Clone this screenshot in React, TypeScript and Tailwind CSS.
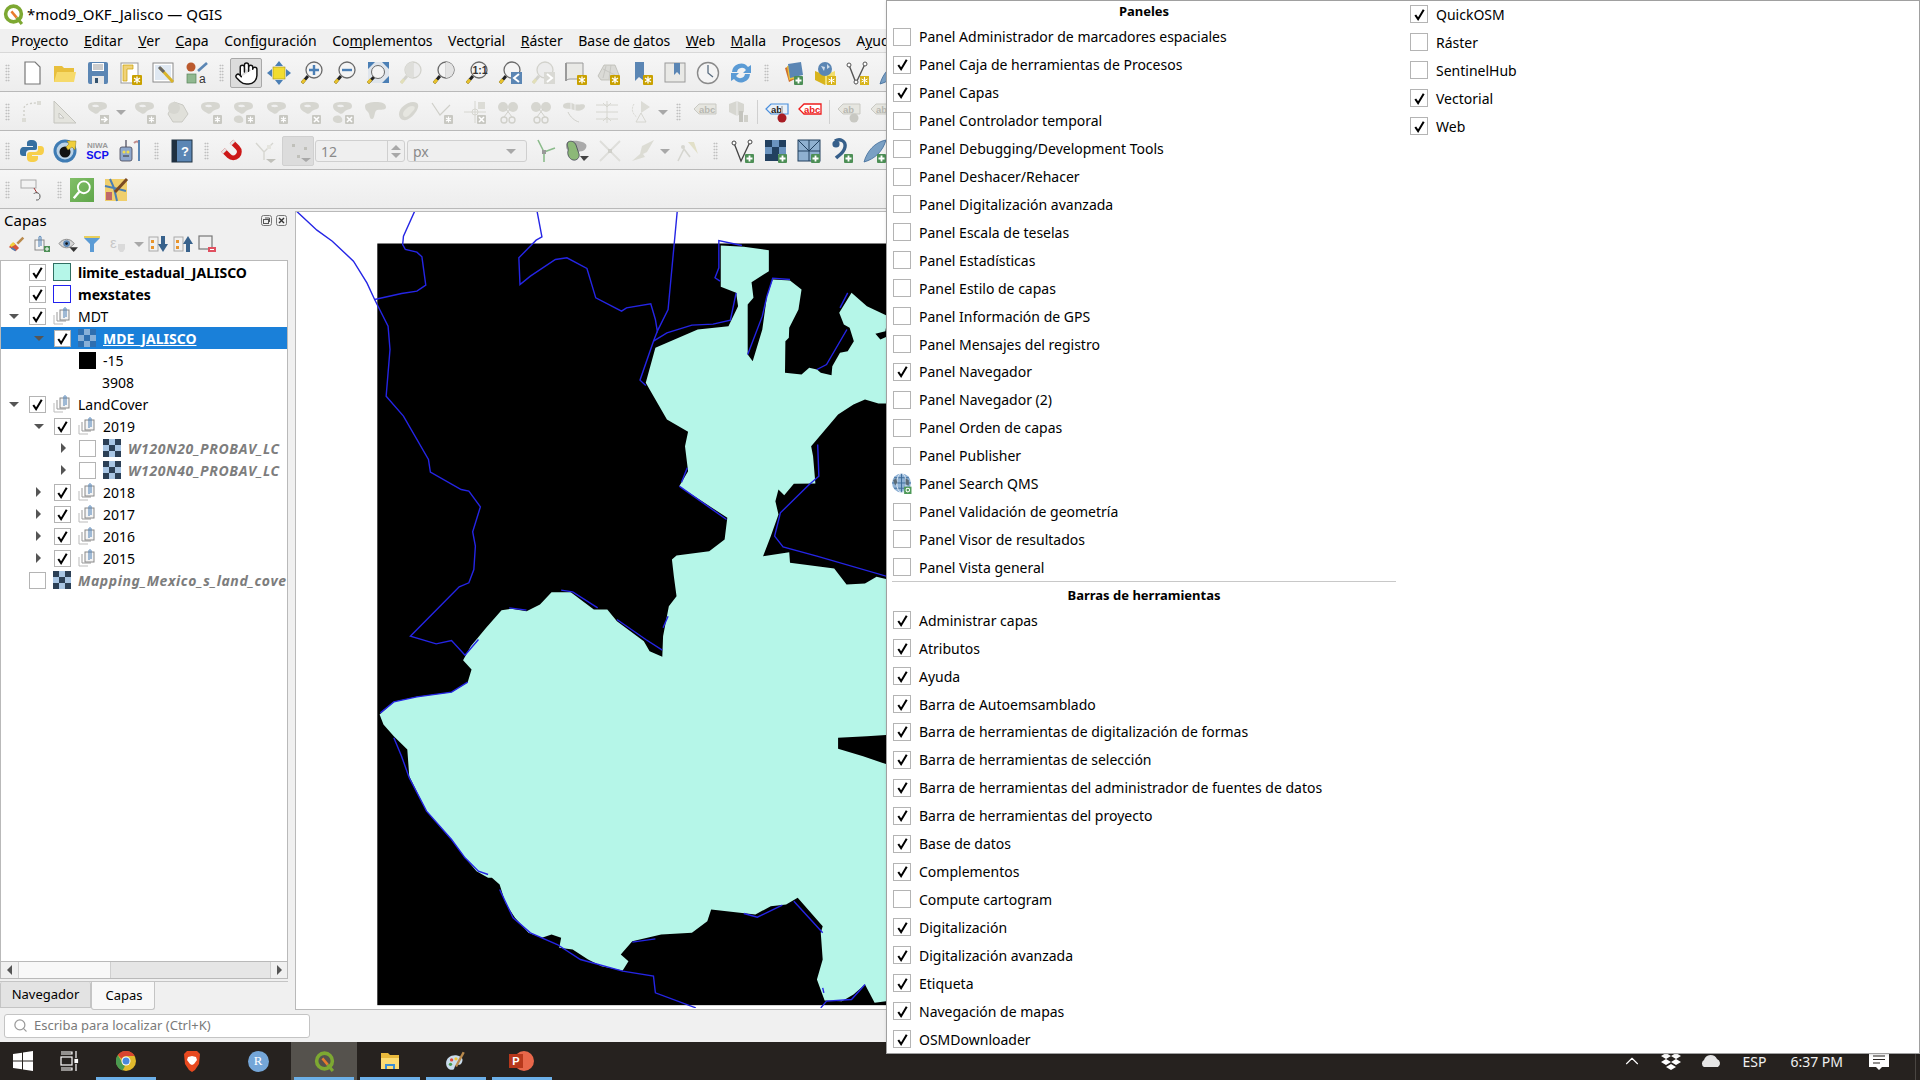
import { Hand, Search, ChevronUp } from 'lucide-react';
import type { ReactNode } from 'react';

const FONT = { fontFamily: '"Noto Sans", sans-serif' };

const PANELS: [string, boolean][] = [
  ['Panel Administrador de marcadores espaciales', false],
  ['Panel Caja de herramientas de Procesos', true],
  ['Panel Capas', true],
  ['Panel Controlador temporal', false],
  ['Panel Debugging/Development Tools', false],
  ['Panel Deshacer/Rehacer', false],
  ['Panel Digitalización avanzada', false],
  ['Panel Escala de teselas', false],
  ['Panel Estadísticas', false],
  ['Panel Estilo de capas', false],
  ['Panel Información de GPS', false],
  ['Panel Mensajes del registro', false],
  ['Panel Navegador', true],
  ['Panel Navegador (2)', false],
  ['Panel Orden de capas', false],
  ['Panel Publisher', false],
  ['Panel Search QMS', false],
  ['Panel Validación de geometría', false],
  ['Panel Visor de resultados', false],
  ['Panel Vista general', false],
];

const TOOLBARS: [string, boolean][] = [
  ['Administrar capas', true],
  ['Atributos', true],
  ['Ayuda', true],
  ['Barra de Autoemsamblado', true],
  ['Barra de herramientas de digitalización de formas', true],
  ['Barra de herramientas de selección', true],
  ['Barra de herramientas del administrador de fuentes de datos', true],
  ['Barra de herramientas del proyecto', true],
  ['Base de datos', true],
  ['Complementos', true],
  ['Compute cartogram', false],
  ['Digitalización', true],
  ['Digitalización avanzada', true],
  ['Etiqueta', true],
  ['Navegación de mapas', true],
  ['OSMDownloader', true],
];

const MORE: [string, boolean][] = [
  ['QuickOSM', true],
  ['Ráster', false],
  ['SentinelHub', false],
  ['Vectorial', true],
  ['Web', true],
];

const MENUS: [string, string, string][] = [
  ['Pro', 'y', 'ecto'],
  ['', 'E', 'ditar'],
  ['', 'V', 'er'],
  ['', 'C', 'apa'],
  ['Con', 'f', 'iguración'],
  ['Co', 'm', 'plementos'],
  ['Vect', 'o', 'rial'],
  ['', 'R', 'áster'],
  ['Base de ', 'd', 'atos'],
  ['', 'W', 'eb'],
  ['', 'M', 'alla'],
  ['Pro', 'c', 'esos'],
  ['A', 'y', 'uda'],
];

function Check({ on, className }: { on: boolean; className: string }) {
  return (
    <span className={`flex shrink-0 items-center justify-center border border-[#b4b4b4] bg-white ${className}`}>
      {on && (
        <svg viewBox="0 0 16 16" className="h-[15px] w-[15px]">
          <path d="M3.5 8.5 L6.5 13 L12.5 3" fill="none" stroke="#000" strokeWidth="2.2" />
        </svg>
      )}
    </span>
  );
}

function QmsGlobe() {
  return (
    <svg viewBox="0 0 20 20" className="h-[21px] w-[21px] -ml-[2px] mr-[-1px] shrink-0">
      <circle cx="10" cy="9.5" r="9" fill="#8fb2d6" />
      <path d="M10 .5v18M1 9.5h18M3 4.5h14M3 14.5h14" stroke="#3d6a98" strokeWidth=".9" />
      <ellipse cx="10" cy="9.5" rx="4.5" ry="9" fill="none" stroke="#e4edf5" strokeWidth=".9" />
      <path d="M2 7l3-2 1 4-2 3zM14 5l3 2v5l-3-1z" fill="#5a6b78" />
      <rect x="12.5" y="13" width="7" height="7" fill="#4f9a58" />
      <circle cx="16" cy="16.3" r="1.7" fill="none" stroke="#fff" />
    </svg>
  );
}

function MenuRow({ label, on }: { label: string; on: boolean }) {
  return (
    <div className="flex h-[28px] items-center gap-[8px] pl-[6px] text-[14px] whitespace-nowrap text-black">
      {label === 'Panel Search QMS' ? <QmsGlobe /> : <Check on={on} className="h-[18px] w-[18px]" />}
      <span>{label}</span>
    </div>
  );
}

function Dots({ className = 'w-[17px]' }: { className?: string }) {
  return (
    <div className={`flex h-full shrink-0 items-center justify-center ${className}`}>
      <div className="h-[18px] w-[5px] bg-[radial-gradient(#b4b4b4_0.7px,transparent_0.9px)] bg-[length:2.5px_3px]" />
    </div>
  );
}

function Tool({ children }: { children: ReactNode }) {
  return <div className="flex h-[24px] w-[33px] shrink-0 items-center justify-center">{children}</div>;
}

function Icon({ children }: { children: ReactNode }) {
  return (
    <svg viewBox="0 0 24 24" className="h-[24px] w-[24px] overflow-visible">
      {children}
    </svg>
  );
}

function Arrow({ className = 'w-[14px]' }: { className?: string }) {
  return (
    <div className={`flex shrink-0 justify-center ${className}`}>
      <div className="h-0 w-0 border-x-[5px] border-t-[5px] border-x-transparent border-t-[#a8a8a8]" />
    </div>
  );
}

function GearBadge() {
  return (
    <g>
      <rect x="13" y="14" width="10" height="10" rx="1" fill="#c9a100" />
      <path d="M18 15.5v7M15 17l6 4M21 17l-6 4" stroke="#fff" strokeWidth="1.3" />
    </g>
  );
}

function PlusBadge() {
  return (
    <g>
      <rect x="14" y="15" width="9" height="9" rx="1" fill="#4d8f56" />
      <path d="M18.5 16.5v6M15.5 19.5h6" stroke="#fff" strokeWidth="1.8" />
    </g>
  );
}

function GrayBadge({ x = false }: { x?: boolean }) {
  return (
    <g>
      <rect x="14" y="15" width="9" height="9" rx="1" fill="#c8c8c2" />
      {x ? (
        <path d="M16 17l5 5M21 17l-5 5" stroke="#fff" strokeWidth="1.6" />
      ) : (
        <path d="M18.5 16.5v6M16 18l5 3M21 18l-5 3" stroke="#fff" strokeWidth="1.2" />
      )}
    </g>
  );
}

function Mag({ off = false, children }: { off?: boolean; children?: ReactNode }) {
  return (
    <Icon>
      <path d="M8 15L2 22" stroke={off ? '#d2d2cc' : '#222'} strokeWidth="3" />
      <path d="M5 18.5L2 22" stroke={off ? '#e2dfb8' : '#e8c22c'} strokeWidth="3" />
      <circle cx="14" cy="9" r="8" fill={off ? '#ececec' : '#f4f4f4'} stroke={off ? '#d2d2cc' : '#6a6a6a'} strokeWidth="1.3" />
      {children}
    </Icon>
  );
}

function GrayBlob({ children }: { children?: ReactNode }) {
  return (
    <Icon>
      <path d="M2 6c0-4 6-4 10-4s9 0 9 4-5 3-7 5-3 4-6 2-6-3-6-7z" fill="#d6d6d0" />
      <path d="M6 6c2-2 6-1 7 0s-5 2-7 0z" fill="#f0f0f0" />
      {children}
    </Icon>
  );
}

function Row({ children }: { children: ReactNode }) {
  return (
    <div className="flex h-[39px] shrink-0 items-center overflow-hidden border-b border-[#b9b9b9] bg-gradient-to-b from-[#f6f6f6] to-[#ededed] pt-[2px]">
      {children}
    </div>
  );
}

function ToolbarOne() {
  return (
    <Row>
      <Dots className="w-[15px]" />
      <Tool><Icon><path d="M5 1h10l5 5v17H5z" fill="#fff" stroke="#777" strokeWidth="1.2" /></Icon></Tool>
      <Tool><Icon><path d="M1 21V5h8l2 2h10v14z" fill="#e8bf3c" /><path d="M1 21l3-10h19l-2 10z" fill="#f6da6b" /></Icon></Tool>
      <Tool><Icon><rect x="2" y="1" width="20" height="22" rx="2" fill="#5b86b4" /><rect x="6" y="2" width="12" height="8" fill="#fff" /><path d="M7 4h10M7 6h10M7 8h10" stroke="#9a9a9a" /><rect x="6" y="15" width="12" height="8" fill="#e8e8e8" /><rect x="9" y="17" width="3" height="5" fill="#34536f" /></Icon></Tool>
      <Tool><Icon><rect x="2" y="2" width="17" height="20" fill="#fff" stroke="#999" /><path d="M4 4h10v4H8v12H4z" fill="#f0d27a" stroke="#c9a100" strokeWidth=".7" /><GearBadge /></Icon></Tool>
      <Tool><Icon><rect x="1" y="2" width="20" height="19" fill="#fff" stroke="#8a8a8a" /><rect x="3" y="4" width="16" height="15" fill="#dfe8f2" /><path d="M8 7l13 14" stroke="#d9b42a" strokeWidth="3" /><path d="M7 6l5 5" stroke="#666" strokeWidth="3" /></Icon></Tool>
      <Tool><Icon><circle cx="6" cy="6" r="4.5" fill="#bb5a2e" /><rect x="2" y="13" width="9" height="9" fill="#90b890" stroke="#5b855b" strokeWidth=".7" /><path d="M13 10L22 2" stroke="#5b86b4" strokeWidth="2.6" /><text x="14" y="22" fontSize="12" fill="#333" fontFamily="Liberation Sans">a</text></Icon></Tool>
      <Dots />
      <div className="flex h-[30px] w-[32px] shrink-0 items-center justify-center rounded-[2px] border border-[#a8a8a8] bg-[#dcdcdc]">
        <Hand size={25} fill="#fff" color="#111" strokeWidth={1.4} />
      </div>
      <Tool><Icon><rect x="6" y="6" width="12" height="12" fill="#f2dc30" stroke="#a08f1c" strokeWidth=".6" /><path d="M12 0l4 5H8zM12 24l4-5H8zM0 12l5-4v8zM24 12l-5-4v8z" fill="#4b7fb5" /></Icon></Tool>
      <Tool><Mag><path d="M9 9h10M14 4v10" stroke="#4b7fb5" strokeWidth="2.4" /></Mag></Tool>
      <Tool><Mag><path d="M9 9h10" stroke="#4b7fb5" strokeWidth="2.4" /></Mag></Tool>
      <Tool><Icon><rect x="2" y="1" width="21" height="21" fill="#dfe5ec" /><path d="M2 1h7L2 8zM23 1h-7l7 7zM23 22h-7l7-7zM2 22V15" fill="#4b7fb5" /><path d="M9 15L2 22" stroke="#222" strokeWidth="3" /><path d="M5 18.5L2 22" stroke="#e8c22c" strokeWidth="3" /><circle cx="12" cy="11" r="6.5" fill="#f4f4f4" stroke="#6a6a6a" /></Icon></Tool>
      <Tool><Mag off><path d="M14 1v16" stroke="#d2d2cc" /><path d="M14 1a8 8 0 0 0 0 16z" fill="#dededa" /></Mag></Tool>
      <Tool><Mag><path d="M14 1v16" stroke="#bbb" /><path d="M14 1a8 8 0 0 1 0 16z" fill="#e3e3e3" /></Mag></Tool>
      <Tool><Mag><text x="7.5" y="13" fontSize="10.5" fontWeight="700" fill="#333" fontFamily="Liberation Sans">1:1</text></Mag></Tool>
      <Tool><Mag><rect x="13" y="11" width="11" height="12" fill="#5b86b4" /><path d="M21 13l-5 4 5 4" fill="none" stroke="#fff" strokeWidth="2" /></Mag></Tool>
      <Tool><Mag off><rect x="13" y="11" width="11" height="12" fill="#d9d9d4" /><path d="M16 13l5 4-5 4" fill="none" stroke="#fff" strokeWidth="2" /></Mag></Tool>
      <Tool><Icon><path d="M2 2h17v16H6c-3 0-4 2-4 2z" fill="#e9e9e6" stroke="#9a9a9a" /><path d="M2 2v18" stroke="#9a9a9a" strokeWidth="2" /><GearBadge /></Icon></Tool>
      <Tool><Icon><path d="M1 15l6-11h11l4 10-6 5H4z" fill="#dadad6" stroke="#b4b4ae" strokeWidth=".7" /><path d="M6 8l12 6M9 5l-3 12M14 4l-2 14" stroke="#bfbfba" strokeWidth=".7" /><GearBadge /></Icon></Tool>
      <Tool><Icon><path d="M5 1h9v19l-5-4-4 4z" fill="#5b86b4" /><GearBadge /></Icon></Tool>
      <Tool><Icon><rect x="2" y="2" width="20" height="19" fill="#e9e9e6" stroke="#9a9a9a" /><path d="M11 2h6v12l-3-3-3 3z" fill="#5b86b4" /></Icon></Tool>
      <Tool><Icon><circle cx="12" cy="12" r="10.5" fill="#f4f4f4" stroke="#8a8a8a" strokeWidth="1.4" /><path d="M12 4v8l5 4" fill="none" stroke="#5a6d80" strokeWidth="1.3" /></Icon></Tool>
      <Tool><Icon><path d="M3 11a9 9 0 0 1 16-5l3-2v8h-8l3-3a5 5 0 0 0-9 2z" fill="#5b9bd5" /><path d="M21 13a9 9 0 0 1-16 5l-3 2v-8h8l-3 3a5 5 0 0 0 9-2z" fill="#5b9bd5" /></Icon></Tool>
      <Dots className="w-[18px]" />
      <Tool><Icon><path d="M5 7l7-3 3 14-6 3z" fill="#d0702c" /><path d="M7 5l8-2 2 14-8 2z" fill="#eac23c" /><path d="M8 3l13-2 2 13-13 3z" fill="#5b86b4" /><PlusBadge /></Icon></Tool>
      <Tool><Icon><path d="M2 10l10 4v10L2 19z" fill="#d8b41c" /><path d="M22 10l-10 4v10l10-5z" fill="#f2de6c" /><circle cx="12" cy="8" r="7" fill="#5b86b4" /><path d="M8 5l4 1-1 4zM14 3l3 3-3 2z" fill="#cfdcea" /><rect x="14" y="15" width="9" height="9" fill="#d8b41c" /><path d="M18.5 16v7M15.5 18l6 3M21.5 18l-6 3" stroke="#fff" /></Icon></Tool>
      <Tool><Icon><path d="M3 4l7 18 9-19" fill="none" stroke="#555" strokeWidth="1.4" /><circle cx="3" cy="4" r="2" fill="#fff" stroke="#555" /><circle cx="19" cy="3" r="2" fill="#fff" stroke="#555" /><circle cx="10" cy="21" r="2" fill="#fff" stroke="#555" /><rect x="14" y="15" width="9" height="9" fill="#d8b41c" /><path d="M18.5 16v7M15.5 18l6 3M21.5 18l-6 3" stroke="#fff" /></Icon></Tool>
      <Tool><Icon><path d="M1 23C4 12 12 3 23 1 20 12 12 20 1 23z" fill="#7aa0c4" stroke="#3d6a98" strokeWidth=".8" /></Icon></Tool>
    </Row>
  );
}

function ToolbarTwo() {
  return (
    <Row>
      <Dots className="w-[15px]" />
      <Tool><Icon><path d="M4 20V9c0-4 3-6 14-6" fill="none" stroke="#cfcfc9" strokeDasharray="2 2" strokeWidth="1.4" /><rect x="2" y="18" width="4" height="4" fill="#dcdcd6" /><rect x="17" y="1" width="4" height="4" fill="#dcdcd6" /></Icon></Tool>
      <Tool><Icon><path d="M1 1v22h22z" fill="#e4e4de" stroke="#c4c4be" /><path d="M6 13v5h5z" fill="#f0f0f0" stroke="#c4c4be" /></Icon></Tool>
      <Tool><GrayBlob><rect x="14" y="15" width="9" height="9" fill="#c8c8c2" /><path d="M15 19.5h5M18 17l3 2.5-3 2.5" fill="none" stroke="#fff" strokeWidth="1.4" /></GrayBlob></Tool>
      <Arrow />
      <Tool><GrayBlob><GrayBadge /></GrayBlob></Tool>
      <Tool><Icon><path d="M8 2l9 3 5 9-6 8H7L2 14z" fill="#e0e0da" stroke="#c9c9c3" /><circle cx="8" cy="8" r="6" fill="#d6d6d0" /></Icon></Tool>
      <Tool><GrayBlob><GrayBadge /></GrayBlob></Tool>
      <Tool><GrayBlob><path d="M2 18c2-3 6-3 8-1s2 6-2 6-7-2-6-5z" fill="#d6d6d0" /><GrayBadge /></GrayBlob></Tool>
      <Tool><GrayBlob><GrayBadge /></GrayBlob></Tool>
      <Tool><GrayBlob><GrayBadge x /></GrayBlob></Tool>
      <Tool><GrayBlob><path d="M2 18c2-3 6-3 8-1s2 6-2 6-7-2-6-5z" fill="#d6d6d0" /><GrayBadge x /></GrayBlob></Tool>
      <Tool><Icon><path d="M1 6c0-3 6-4 11-4s10 1 10 5-6 2-9 3-2 9-5 9-2-5-4-7-3-3-3-6z" fill="#d6d6d0" /></Icon></Tool>
      <Tool><Icon><path d="M2 14C2 8 10 2 16 2s6 4 4 8-7 9-11 10-7-2-7-6z" fill="#d6d6d0" /><path d="M6 14c0-3 5-8 9-8s3 3 1 5-5 6-7 6-3-1-3-3z" fill="#e6e6e0" /></Icon></Tool>
      <Tool><Icon><path d="M2 3l8 12 10-10" fill="none" stroke="#cfcfc9" strokeWidth="1.2" /><GrayBadge /></Icon></Tool>
      <Tool><Icon><path d="M12 1v22M1 12h22" stroke="#d6d6d0" /><circle cx="12" cy="12" r="3" fill="none" stroke="#d6d6d0" /><rect x="15" y="2" width="7" height="7" fill="#dcdcd6" /><GrayBadge x /></Icon></Tool>
      <Tool><Icon><circle cx="7" cy="7" r="5" fill="#d6d6d0" /><circle cx="17" cy="7" r="5" fill="#d6d6d0" /><circle cx="8" cy="20" r="3" fill="none" stroke="#d0d0ca" strokeWidth="1.4" /><circle cx="16" cy="20" r="3" fill="none" stroke="#d0d0ca" strokeWidth="1.4" /><path d="M8 17l6-8M16 17l-6-8" stroke="#d0d0ca" /></Icon></Tool>
      <Tool><Icon><circle cx="7" cy="7" r="5" fill="#d6d6d0" /><circle cx="17" cy="7" r="5" fill="#d6d6d0" /><circle cx="8" cy="20" r="3" fill="none" stroke="#d0d0ca" strokeWidth="1.4" /><circle cx="16" cy="20" r="3" fill="none" stroke="#d0d0ca" strokeWidth="1.4" /><path d="M8 17l6-8M16 17l-6-8" stroke="#d0d0ca" /></Icon></Tool>
      <Tool><Icon><path d="M1 6c0-4 8-4 11-2s11-2 11 2-7 6-11 4S1 10 1 6z" fill="#d6d6d0" /><path d="M9 2v9M13 2v9" stroke="#f0f0f0" /><path d="M6 12c2 5 7 9 11 10" fill="none" stroke="#d0d0ca" /></Icon></Tool>
      <Tool><Icon><path d="M1 5h22M1 12h22M1 19h22M12 1v22" stroke="#d6d6d0" /><path d="M8 3l4 4 4-4M8 21l4-4 4 4" fill="none" stroke="#d6d6d0" /></Icon></Tool>
      <Tool><Icon><path d="M13 1l9 6-9 6z" fill="#dcdcd6" /><path d="M6 4a9 9 0 0 0 3 13" fill="none" stroke="#d6d6d0" strokeDasharray="2 1" /><path d="M13 13l-5 9h10z" fill="none" stroke="#d6d6d0" /></Icon></Tool>
      <Arrow className="w-[13px]" />
      <Dots className="w-[19px]" />
      <Tool><Icon><path d="M1 9l5-5h17v10H6z" fill="#e6e6e0" stroke="#c9c9c3" /><text x="6" y="13" fontSize="9.5" fontWeight="700" fill="#b8b8b2" fontFamily="Liberation Sans">abc</text></Icon></Tool>
      <Tool><Icon><path d="M3 4l8-3 7 3v8l-7 4-8-4z" fill="#d6d6d0" /><path d="M11 1v15" stroke="#eee" /><rect x="13" y="11" width="4" height="11" fill="#c4c4be" /><rect x="18" y="15" width="4" height="7" fill="#d0d0ca" /></Icon></Tool>
      <div className="ml-[3px] mr-[2px] h-[24px] w-[1px] shrink-0 bg-[#d0d0d0]" />
      <Tool><Icon><path d="M1 9l5-5h17v10H6z" fill="#e8f0f8" stroke="#4b8fdc" strokeWidth="1.2" /><text x="6" y="13" fontSize="9.5" fontWeight="700" fill="#222" fontFamily="Liberation Sans">ab</text><path d="M17 6v10" stroke="#bbb" strokeWidth="2" /><circle cx="17" cy="18" r="4.5" fill="#a81c24" /></Icon></Tool>
      <Tool><Icon><path d="M1 9l5-5h17v10H6z" fill="#fff" stroke="#ee1c1c" strokeWidth="1.3" /><text x="6" y="13" fontSize="9.5" fontWeight="700" fill="#ee1c1c" fontFamily="Liberation Sans">abc</text></Icon></Tool>
      <div className="ml-[3px] mr-[2px] h-[24px] w-[1px] shrink-0 bg-[#d0d0d0]" />
      <Tool><Icon><path d="M1 9l5-5h17v10H6z" fill="#e6e6e0" stroke="#c9c9c3" /><text x="6" y="13" fontSize="9.5" fontWeight="700" fill="#b8b8b2" fontFamily="Liberation Sans">ab</text><circle cx="17" cy="18" r="4.5" fill="#c8c8c2" /></Icon></Tool>
      <Tool><Icon><path d="M1 9l5-5h17v10H6z" fill="#e6e6e0" stroke="#c9c9c3" /><text x="6" y="13" fontSize="9.5" fontWeight="700" fill="#b8b8b2" fontFamily="Liberation Sans">ab</text></Icon></Tool>
    </Row>
  );
}

function ToolbarThree() {
  return (
    <Row>
      <Dots className="w-[15px]" />
      <Tool><Icon><path d="M12 1c-5 0-5 2-5 4v2h6v1H4c-3 0-4 2-4 5s1 4 4 4h2v-3c0-2 2-3 4-3h5c2 0 2-1 2-3V5c0-2-2-4-5-4z" fill="#366fa0" /><path d="M12 23c5 0 6-2 6-4v-2h-6v-1h8c3 0 4-2 4-5s-1-4-4-4h-2v3c0 2-1 3-3 3H10c-2 0-3 1-3 3v3c0 3 2 4 5 4z" fill="#f7cf4a" /></Icon></Tool>
      <Tool><Icon><circle cx="12" cy="12" r="11.5" fill="#3f7cb4" /><circle cx="12" cy="12" r="8.5" fill="#bcd3e6" /><circle cx="12" cy="13" r="5.5" fill="#111" /><path d="M14 2l9 0-1 9-3-3-4 3-2-3 3-3z" fill="#f0cf3c" stroke="#8c7a1c" strokeWidth=".5" /></Icon></Tool>
      <div className="flex w-[33px] shrink-0 flex-col items-center leading-none" style={{ fontFamily: '"Liberation Sans", sans-serif' }}>
        <span className="text-[8px] font-bold text-[#9a9a9a]">NIWA</span>
        <span className="text-[11px] font-bold text-[#1111ee]">SCP</span>
      </div>
      <Tool><Icon><rect x="1" y="8" width="12" height="14" rx="2" fill="#8fa8cc" stroke="#445" strokeWidth=".8" /><circle cx="5" cy="13" r="1.5" fill="#f2de4c" /><circle cx="9" cy="13" r="1.5" fill="#f2de4c" /><path d="M4 17h6" stroke="#333" /><path d="M7 8V1" stroke="#445" strokeWidth="1.2" /><path d="M15 4c3-3 5-1 5 1v17" fill="none" stroke="#c08c8c" strokeWidth="2" /><path d="M20 1v21" stroke="#5b86b4" strokeWidth="2" /></Icon></Tool>
      <Dots className="w-[18px]" />
      <Tool><Icon><rect x="2" y="1" width="20" height="22" fill="#5b86b4" stroke="#1f3040" /><rect x="2" y="1" width="5" height="22" fill="#1f3040" /><text x="11" y="17" fontSize="13" fontWeight="700" fill="#fff" fontFamily="Liberation Sans">?</text></Icon></Tool>
      <Dots />
      <Tool><Icon><path d="M3 11L9 17A6 6 0 0 0 17.500 8.500L11.500 2.500" fill="none" stroke="#cc1818" strokeWidth="5" /><path d="M3 11L5 13M11.500 2.500L13.500 4.500" fill="none" stroke="#e6e6e6" strokeWidth="5" /></Icon></Tool>
      <Tool><Icon><path d="M3 4l8 9 9-9M11 13v8" fill="none" stroke="#d6d6d0" strokeWidth="1.4" /><rect x="14" y="6" width="4" height="4" fill="#e4e4de" /><path d="M13 20l5 4 5-4z" fill="#c0c0ba" /></Icon></Tool>
      <div className="ml-[1px] flex h-[30px] w-[32px] shrink-0 items-center justify-center rounded-[2px] border border-[#d0d0d0] bg-[#dcdcdc]">
        <Icon><rect x="6" y="5" width="3" height="3" fill="#c0c0ba" /><rect x="18" y="8" width="3" height="3" fill="#c0c0ba" /><rect x="11" y="16" width="3" height="3" fill="#c0c0ba" /><path d="M15 19l5 4 5-4z" fill="#a8a8a8" /></Icon>
      </div>
      <div className="ml-[1px] flex h-[22px] w-[90px] shrink-0 items-center justify-between rounded-[3px] border border-[#cfcfcf] bg-[#efefef] pl-[5px] text-[14px] text-[#8a8a8a]">
        12
        <div className="flex h-full w-[17px] flex-col items-center justify-center gap-[3px] border-l border-[#cfcfcf]">
          <div className="h-0 w-0 border-x-[5px] border-b-[5px] border-x-transparent border-b-[#a8a8a8]" />
          <div className="h-0 w-0 border-x-[5px] border-t-[5px] border-x-transparent border-t-[#a8a8a8]" />
        </div>
      </div>
      <div className="ml-[2px] flex h-[22px] w-[120px] shrink-0 items-center justify-between rounded-[3px] border border-[#cfcfcf] bg-[#efefef] pl-[5px] pr-[10px] text-[14px] text-[#8a8a8a]">
        px
        <div className="h-0 w-0 border-x-[5px] border-t-[5px] border-x-transparent border-t-[#a8a8a8]" />
      </div>
      <Tool><Icon><path d="M12 13L6 1M12 13L23 9M12 13v10" stroke="#8cbc8c" strokeWidth="1.6" /><rect x="10" y="11" width="4" height="4" fill="#999" /></Icon></Tool>
      <Tool><Icon><path d="M1 6c0-3 6-5 12-4s10 3 8 7-6 3-8 4-6-2-9-2-3-3-3-5z" fill="#aaa" /><path d="M3 3c3-2 7 0 8 3s2 6 3 9-2 7-6 6-6-6-5-9-2-6 0-9z" fill="#8cb878" stroke="#445" strokeWidth=".8" /><path d="M15 17l4 5 5-5z" fill="#444" /></Icon></Tool>
      <Tool><Icon><path d="M2 2l20 20M22 2L2 22" stroke="#dededa" strokeWidth="1.8" /><rect x="10" y="10" width="4" height="4" fill="#d0d0ca" /></Icon></Tool>
      <Tool><Icon><path d="M1 22l8-7 2-8 12-6-7 12-4 2 2 3-13 4z" fill="#dcdcd4" /></Icon></Tool>
      <Arrow className="w-[12px]" />
      <Tool><Icon><path d="M2 22l6-12 6 8" fill="none" stroke="#d6d6d0" strokeWidth="1.6" /><path d="M12 3l6 0 4 12z" fill="#e2e0c8" /><circle cx="7" cy="8" r="2" fill="#d6d6d0" /></Icon></Tool>
      <Dots className="w-[22px]" />
      <Tool><Icon><path d="M3 4l7 18 9-19" fill="none" stroke="#444" strokeWidth="1.3" /><circle cx="3" cy="4" r="2" fill="#fff" stroke="#444" /><circle cx="19" cy="3" r="2" fill="#fff" stroke="#444" /><PlusBadge /></Icon></Tool>
      <Tool><Icon><path d="M1 1h7v7H1zM15 1h7v7h-7zM8 8h7v7H8z" fill="#22405f" /><path d="M8 1h7v7H8zM1 8h7v7H1zM15 8h7v7h-7z" fill="#6b94bf" /><path d="M1 15h7v7H1zM8 15h6v7H8z" fill="#22405f" /><PlusBadge /></Icon></Tool>
      <Tool><Icon><rect x="1" y="1" width="22" height="21" fill="#8fb0d0" stroke="#22405f" /><path d="M1 12h22M12 1v21M1 1l11 11M12 12L23 1" stroke="#22405f" /><PlusBadge /></Icon></Tool>
      <Tool><Icon><path d="M5 2c5-3 11 0 10 6s-7 9-9 11" fill="none" stroke="#365f8a" strokeWidth="3.4" /><circle cx="6" cy="5" r="3.6" fill="#365f8a" /><PlusBadge /></Icon></Tool>
      <Tool><Icon><path d="M1 23C4 12 12 3 23 1 20 12 12 20 1 23z" fill="#7aa0c4" stroke="#3d6a98" strokeWidth=".8" /><PlusBadge /></Icon></Tool>
    </Row>
  );
}

function ToolbarFour() {
  return (
    <Row>
      <Dots className="w-[15px]" />
      <Tool><Icon><rect x="1" y="2" width="15" height="8" fill="#f2f2f2" stroke="#aaa" /><path d="M14 10l3 5" stroke="#a03030" /><path d="M14 16c0-2 6-2 6 2s-2 4-4 4" fill="none" stroke="#555" /></Icon></Tool>
      <Dots className="w-[22px]" />
      <div className="flex h-[24px] w-[24px] shrink-0 items-center justify-center bg-gradient-to-br from-[#82bf68] to-[#5fa64a]">
        <svg viewBox="0 0 24 24" className="h-[22px] w-[22px]"><circle cx="14" cy="9" r="6.5" fill="none" stroke="#fff" strokeWidth="2" /><path d="M9 14l-6 7" stroke="#fff" strokeWidth="2.6" /></svg>
      </div>
      <div className="w-[5px] shrink-0" />
      <Tool><Icon><rect x="1" y="1" width="22" height="22" fill="#f0cf6c" /><path d="M1 8l9 2 3 13M6 1l4 9 12 3" fill="none" stroke="#4b7fb5" strokeWidth="2" /><path d="M2 14h6v8H2z" fill="#c06868" /><path d="M11 14L23 1" stroke="#7a4a24" strokeWidth="3" /></Icon></Tool>
    </Row>
  );
}

function TreeRow({
  level,
  arrow,
  on,
  icon,
  label,
  tone = 'normal',
}: {
  level: 0 | 1 | 2;
  arrow?: 'open' | 'closed';
  on: boolean;
  icon: ReactNode;
  label: string;
  tone?: 'normal' | 'bold' | 'off' | 'selected';
}) {
  const rowTone = tone === 'selected' ? 'bg-[#1a80d9]' : '';
  const indent = level === 0 ? 'pl-0' : level === 1 ? 'pl-[25px]' : 'pl-[50px]';
  const text =
    tone === 'bold'
      ? 'font-bold text-black'
      : tone === 'off'
        ? 'font-bold italic tracking-[0.6px] text-[#7d7d7d]'
        : tone === 'selected'
          ? 'font-bold text-white underline'
          : 'text-black';
  return (
    <div className={`flex h-[22px] items-center whitespace-nowrap ${indent} ${rowTone}`}>
      <div className="flex w-[25px] shrink-0 justify-center">
        {arrow === 'open' && <div className="h-0 w-0 border-x-[5px] border-t-[5px] border-x-transparent border-t-[#555]" />}
        {arrow === 'closed' && <div className="h-0 w-0 border-y-[5px] border-l-[5px] border-y-transparent border-l-[#555]" />}
      </div>
      <Check on={on} className="ml-[3px] h-[17px] w-[17px]" />
      <div className="ml-[6px] flex w-[19px] shrink-0 justify-center">{icon}</div>
      <span className={`ml-[7px] text-[14px] ${text}`}>{label}</span>
    </div>
  );
}

function GroupIcon() {
  return (
    <svg viewBox="0 0 18 18" className="h-[18px] w-[18px]">
      <path d="M1 17h9M1 17V8" stroke="#bbb" fill="none" />
      <path d="M4 14h9M4 14V5" stroke="#999" fill="none" />
      <rect x="7" y="3" width="9" height="10" fill="#f4f4f4" stroke="#888" />
      <path d="M11 11V1.5c0-1 2-1 2 0V10" fill="none" stroke="#4b7fb5" />
    </svg>
  );
}

function RasterIcon({ dark = false }: { dark?: boolean }) {
  const a = dark ? '#2b3f55' : '#2f6fb0';
  const b = dark ? '#a9c6e4' : '#88b0d8';
  return (
    <svg viewBox="0 0 18 18" className="h-[18px] w-[18px]">
      <path d="M0 0h6v6H0zM12 0h6v6h-6zM6 6h6v6H6zM0 12h6v6H0zM12 12h6v6h-6z" fill={a} />
      <path d="M6 0h6v6H6zM0 6h6v6H0zM12 6h6v6h-6zM6 12h6v6H6z" fill={b} />
    </svg>
  );
}

function LayerTree() {
  return (
    <div className="min-h-0 flex-1 overflow-hidden border border-[#b9b9b9] bg-white">
      <TreeRow level={0} on tone="bold" label="limite_estadual_JALISCO" icon={<span className="block h-[18px] w-[18px] border border-[#2f6f62] bg-[#b5f6e8]" />} />
      <TreeRow level={0} on tone="bold" label="mexstates" icon={<span className="block h-[18px] w-[18px] border border-[#2222ee] bg-white" />} />
      <TreeRow level={0} arrow="open" on label="MDT" icon={<GroupIcon />} />
      <TreeRow level={1} arrow="open" on tone="selected" label="MDE_JALISCO" icon={<RasterIcon />} />
      <div className="flex h-[22px] items-center pl-[78px] text-[14px] text-black">
        <span className="h-[17px] w-[17px] bg-black" />
        <span className="ml-[7px]">-15</span>
      </div>
      <div className="flex h-[22px] items-center pl-[101px] text-[14px] text-black">3908</div>
      <TreeRow level={0} arrow="open" on label="LandCover" icon={<GroupIcon />} />
      <TreeRow level={1} arrow="open" on label="2019" icon={<GroupIcon />} />
      <TreeRow level={2} arrow="closed" on={false} tone="off" label="W120N20_PROBAV_LC" icon={<RasterIcon dark />} />
      <TreeRow level={2} arrow="closed" on={false} tone="off" label="W120N40_PROBAV_LC" icon={<RasterIcon dark />} />
      <TreeRow level={1} arrow="closed" on label="2018" icon={<GroupIcon />} />
      <TreeRow level={1} arrow="closed" on label="2017" icon={<GroupIcon />} />
      <TreeRow level={1} arrow="closed" on label="2016" icon={<GroupIcon />} />
      <TreeRow level={1} arrow="closed" on label="2015" icon={<GroupIcon />} />
      <TreeRow level={0} on={false} tone="off" label="Mapping_Mexico_s_land_cove" icon={<RasterIcon dark />} />
    </div>
  );
}

function LayerTools() {
  return (
    <div className="flex h-[28px] shrink-0 items-center pb-[4px] pl-[4px]">
      <div className="flex w-[25px] shrink-0 justify-center">
        <svg viewBox="0 0 20 20" className="h-[17px] w-[17px]"><path d="M1 13l6-5 6 6-4 4z" fill="#d4553c" /><path d="M2 11l4-4 3 3-5 3z" fill="#f2cf3c" /><path d="M4 14l5 3" stroke="#4b7fb5" strokeWidth="2" /><path d="M11 9l7-7" stroke="#b98a4c" strokeWidth="3" /></svg>
      </div>
      <div className="flex w-[26px] shrink-0 justify-center"><svg viewBox="0 0 18 18" className="h-[18px] w-[18px]"><rect x="2" y="5" width="9" height="10" fill="#f4f4f4" stroke="#888" /><path d="M6 12V2c0-1 2-1 2 0v9" fill="none" stroke="#4b7fb5" /><rect x="11" y="11" width="6" height="6" fill="#4d8f56" /><path d="M14 12v4M12 14h4" stroke="#fff" /></svg></div>
      <div className="flex w-[26px] shrink-0 justify-center"><svg viewBox="0 0 22 18" className="h-[17px] w-[21px]"><path d="M1 8c4-6 12-6 16 0-4 6-12 6-16 0z" fill="#d6d6d6" stroke="#888" /><circle cx="9" cy="8" r="3.6" fill="#5b86b4" /><circle cx="9" cy="8" r="1.4" fill="#111" /><path d="M12 12h9l-4.500 5z" fill="#333" /></svg></div>
      <div className="flex w-[22px] shrink-0 justify-center"><svg viewBox="0 0 18 18" className="h-[18px] w-[18px]"><path d="M1 1h16v2l-6 6v8H7V9L1 3z" fill="#5b9bd5" /><rect x="1" y="1" width="16" height="2" fill="#e8cf5c" /></svg></div>
      <div className="flex w-[30px] shrink-0 justify-center"><svg viewBox="0 0 18 18" className="h-[18px] w-[18px]"><text x="1" y="13" fontSize="15" fill="#c8c8c8" fontFamily="Liberation Sans">ε</text><path d="M9 9h7v5l-2 3h-3l-2-3z" fill="#dadada" /></svg></div>
      <Arrow className="w-[12px]" />
      <div className="flex w-[25px] shrink-0 justify-center"><svg viewBox="0 0 20 18" className="h-[18px] w-[20px]"><rect x="1" y="2" width="9" height="14" fill="none" stroke="#aaa" /><rect x="3" y="5" width="3" height="3" fill="#e8942c" /><rect x="3" y="11" width="3" height="3" fill="#e8942c" /><path d="M10 9h3V1h4v8h3l-5 8z" fill="#38628c" /></svg></div>
      <div className="flex w-[25px] shrink-0 justify-center"><svg viewBox="0 0 20 18" className="h-[18px] w-[20px]"><rect x="1" y="2" width="9" height="14" fill="none" stroke="#aaa" /><rect x="3" y="5" width="3" height="3" fill="#e8942c" /><rect x="3" y="11" width="3" height="3" fill="#e8942c" /><path d="M10 9h3v8h4V9h3l-5-8z" fill="#38628c" /></svg></div>
      <div className="flex w-[24px] shrink-0 justify-center"><svg viewBox="0 0 18 18" className="h-[18px] w-[18px]"><rect x="1" y="1" width="13" height="13" fill="none" stroke="#777" strokeWidth="1.2" /><rect x="10" y="12" width="8" height="5" fill="#e05060" /><path d="M12 14.500h4" stroke="#fff" /></svg></div>
    </div>
  );
}

function LeftPanel() {
  return (
    <div className="flex w-[288px] shrink-0 flex-col">
      <div className="flex h-[23px] shrink-0 items-center justify-between pl-[4px] pr-[1px] text-[15px] text-black">
        <span>Capas</span>
        <div className="flex gap-[4px]">
          <svg viewBox="0 0 11 11" className="h-[11px] w-[11px]"><rect x=".5" y=".5" width="10" height="10" rx="2" fill="none" stroke="#777" /><rect x="2.500" y="4.500" width="5" height="4" fill="none" stroke="#555" /><path d="M4 3h4.500v4" fill="none" stroke="#555" /></svg>
          <svg viewBox="0 0 11 11" className="h-[11px] w-[11px]"><rect x=".5" y=".5" width="10" height="10" rx="2" fill="none" stroke="#777" /><path d="M3 3l5 5M8 3L3 8" stroke="#333" strokeWidth="1.4" /></svg>
        </div>
      </div>
      <LayerTools />
      <LayerTree />
      <div className="flex h-[17px] shrink-0 items-stretch border-x border-b border-[#b9b9b9] bg-[#f0f0f0]">
        <div className="flex w-[17px] items-center justify-center"><div className="h-0 w-0 border-y-[5px] border-r-[5px] border-y-transparent border-r-[#555]" /></div>
        <div className="w-[93px] border-x border-[#cfcfcf] bg-[#f8f8f8]" />
        <div className="flex-1 bg-[#e6e6e6]" />
        <div className="flex w-[17px] items-center justify-center border-l border-[#cfcfcf]"><div className="h-0 w-0 border-y-[5px] border-l-[5px] border-y-transparent border-l-[#555]" /></div>
      </div>
      <div className="mt-[2px] h-px shrink-0 bg-[#c4c4c4]" />
      <div className="flex h-[27px] shrink-0 items-start text-[13px] text-black">
        <div className="flex h-[26px] w-[91px] items-center justify-center rounded-t-[2px] border border-t-0 border-[#c4c4c4] bg-[#e3e3e3]">Navegador</div>
        <div className="flex h-[28px] w-[64px] items-center justify-center rounded-b-[3px] border border-t-0 border-[#c4c4c4] bg-[#f8f8f8] pl-[2px]">Capas</div>
      </div>
    </div>
  );
}

// map traced in zoomed pixel space, the viewBox scales it back to the canvas
const TEAL =
  '1120,138 1180,142 1245,152 1245,215 1200,248 1205,295 1190,315 1190,465 1203,485 1228,390 1240,290 1255,240 1300,243 1330,270 1322,330 1298,385 1297,415 1288,425 1287,520 1330,525 1350,505 1370,510 1380,520 1408,527 1410,500 1430,460 1450,455 1466,425 1455,385 1440,375 1428,340 1460,280 1500,320 1555,350 1548,395 1522,403 1535,420 1565,405 1565,612 1530,612 1495,600 1465,615 1425,645 1355,740 1360,770 1366,852 1310,853 1285,887 1270,870 1262,905 1270,945 1250,1010 1230,1070 1298,1058 1300,1090 1370,1100 1415,1107 1447,1155 1495,1152 1525,1132 1565,1143 1565,2370 1550,2405 1520,2410 1495,2355 1465,2385 1435,2405 1390,2403 1370,2340 1385,2280 1380,2200 1385,2180 1320,2095 1290,2115 1250,2120 1210,2145 1095,2130 1085,2165 1045,2200 965,2205 890,2225 860,2265 880,2285 865,2313 810,2300 775,2280 735,2250 700,2245 705,2215 680,2205 655,2215 620,2200 585,2155 560,2110 545,2055 525,2035 515,2035 485,2015 455,1975 420,1920 355,1835 310,1730 305,1650 270,1610 243,1575 233,1545 270,1507 330,1492 420,1478 462,1448 472,1410 450,1382 470,1340 510,1285 550,1232 575,1228 615,1235 650,1215 680,1178 730,1178 790,1230 825,1230 850,1265 920,1325 935,1355 968,1372 970,1310 985,1220 1005,1190 998,1130 993,1080 1005,1068 1090,1055 1130,1020 1137,955 1012,860 1035,815 1027,740 1035,697 980,660 925,550 950,445 1060,390 1140,380 1165,320 1160,280 1120,262';

const BLOB = '1425,1615 1500,1610 1565,1605 1565,1700 1490,1670 1425,1648';

const LINES = [
  '15,33 70,92 110,125 165,185 200,250 220,300 255,380 260,450 250,590 295,650 360,780 365,818 445,870 465,875 495,922 475,997 482,1040 478,1110 465,1150 440,1162 313,1310 380,1333 420,1323 455,1367 490,1320',
  '220,300 290,282 330,275 353,257 343,172 330,158 300,150 293,135 295,110 325,33',
  '642,33 655,112 640,122 595,175 598,255 625,230 690,180 720,175 772,207 795,295 862,335 875,325 938,313 950,360 955,395 983,330 1007,33',
  '955,395 945,425 910,542 925,558',
  '945,425 980,400 1045,377 1100,374 1145,362 1160,280',
  '1118,245 1105,235 1115,205 1115,123 1175,138',
  '1190,465 1228,350 1240,290 1255,236 1300,240',
  '1430,325 1450,280',
  '1448,390 1395,495 1370,510',
  '1012,860 1135,960',
  '1018,848 1033,805',
  '1372,735 1375,830 1350,855 1275,940 1260,1010 1282,1042 1370,1070 1565,1135',
  '570,1225 615,1232',
  '705,1172 735,1177 800,1225',
  '850,1260 925,1320 968,1352',
  '970,1285 983,1250',
  '235,1540 270,1507 330,1492 420,1478 462,1448',
  '270,1615 290,1670 310,1735 355,1835 420,1920 455,1975 490,2015 515,2025',
  '545,2070 580,2155 625,2200 695,2235 755,2280 865,2315 945,2330 950,2380 1055,2425',
  '1380,2425 1395,2405 1460,2400 1495,2355',
  '1550,2400 1565,2408',
  '890,2228 950,2218',
  '1180,2142 1215,2153 1280,2117',
  '1310,2105 1385,2200',
  '1385,2365 1388,2380',
];

function MapCanvas() {
  return (
    <div className="ml-[7px] mt-[2px] mb-[-1px] flex-1 overflow-hidden border border-[#b9b9b9] bg-white">
      <svg viewBox="15.6 37.5 1534 2388" preserveAspectRatio="none" className="block h-[796px] w-[590px]">
        <rect x="227" y="132" width="1400" height="2285" fill="#000" />
        <polygon points={TEAL} fill="#b5f6e8" />
        <polygon points={BLOB} fill="#000" />
        {LINES.map((points) => (
          <polyline key={points} points={points} fill="none" stroke="#2525e5" strokeWidth="1.4" vectorEffect="non-scaling-stroke" />
        ))}
      </svg>
    </div>
  );
}

function TaskIcon({ active, bar, children }: { active?: boolean; bar?: boolean; children: ReactNode }) {
  return (
    <div className={`relative flex h-full w-[66px] shrink-0 items-center justify-center ${active ? 'bg-[#55524d]' : ''}`}>
      {children}
      {bar && <div className="absolute inset-x-[3px] bottom-0 h-[3px] bg-[#6cb0e8]" />}
    </div>
  );
}

function Taskbar() {
  return (
    <div className="flex h-[38px] shrink-0 items-center bg-[#26221f]">
      <div className="flex w-[45px] shrink-0 justify-center">
        <svg viewBox="0 0 20 20" className="h-[20px] w-[20px]"><path d="M0 3l9-1.300V9.500H0zM10 1.500L20 0v9.500H10zM0 10.500h9v7.800L0 17zM10 10.500h10V20l-10-1.500z" fill="#fff" /></svg>
      </div>
      <div className="flex w-[48px] shrink-0 justify-center">
        <svg viewBox="0 0 20 20" className="h-[20px] w-[20px]" fill="none" stroke="#fff" strokeWidth="1.200"><path d="M2 1h11v2H2M2 19h11v-2H2" /><rect x="2" y="6" width="11" height="8" /><path d="M17 0v7M17 13v7" /><rect x="16" y="8.500" width="2.500" height="3" fill="#fff" /></svg>
      </div>
      <TaskIcon bar>
        <svg viewBox="0 0 20 20" className="h-[20px] w-[20px]"><circle cx="10" cy="10" r="10" fill="#e0b92c" /><path d="M10 0a10 10 0 0 1 8.700 5H10a5 5 0 0 0-4.500 2.800L1.800 4A10 10 0 0 1 10 0z" fill="#d8452f" /><path d="M1.800 4l3.800 6.500A5 5 0 0 0 9 15l-2.500 4.400A10 10 0 0 1 1.800 4z" fill="#4a9a50" /><circle cx="10" cy="10" r="4.500" fill="#fff" /><circle cx="10" cy="10" r="3.500" fill="#4a88dc" /></svg>
      </TaskIcon>
      <TaskIcon>
        <svg viewBox="0 0 18 21" className="h-[21px] w-[18px]"><path d="M4 0h10l3 3-1 10-4 6-3 2-3-2-4-6L1 3z" fill="#e8491f" /><path d="M5 6l4-1 4 1 1 3-3 4-2 1-2-1-3-4z" fill="#fff" /></svg>
      </TaskIcon>
      <TaskIcon>
        <div className="flex h-[21px] w-[21px] items-center justify-center rounded-full bg-[#74a6d8] text-[13px] text-white" style={{ fontFamily: '"Liberation Serif", serif' }}>R</div>
      </TaskIcon>
      <TaskIcon active bar>
        <svg viewBox="0 0 20 20" className="h-[21px] w-[21px]"><circle cx="10" cy="9.500" r="7.500" fill="none" stroke="#7da832" strokeWidth="3.400" /><path d="M13 13l5 6" stroke="#7da832" strokeWidth="3" /><path d="M8 7l5 6" stroke="#e87c2c" strokeWidth="2.400" /></svg>
      </TaskIcon>
      <TaskIcon bar>
        <svg viewBox="0 0 20 20" className="h-[20px] w-[20px]"><path d="M1 2h7l2 2h9v14H1z" fill="#e8b93c" /><rect x="1" y="7" width="18" height="11" fill="#fbdc74" /><path d="M5 13h10v5h-2v-3H7v3H5z" fill="#3a8ed4" /></svg>
      </TaskIcon>
      <TaskIcon bar>
        <svg viewBox="0 0 20 20" className="h-[22px] w-[22px]"><path d="M1 12C1 7 6 4 11 5s6 4 4 7-5 0-6 3-1 3-3 3-5-2-5-6z" fill="#c9dcec" /><circle cx="6" cy="9" r="1.500" fill="#e04a3c" /><circle cx="10" cy="8" r="1.500" fill="#f0c93c" /><circle cx="5" cy="13" r="1.500" fill="#4a9a50" /><path d="M10 15L17 2" stroke="#b98a4c" strokeWidth="2.200" /></svg>
      </TaskIcon>
      <TaskIcon bar>
        <div className="relative h-[20px] w-[20px]">
          <div className="absolute right-[-2px] top-0 h-[20px] w-[20px] rounded-full bg-[#e8674a]" />
          <div className="absolute left-[-3px] top-[3px] flex h-[14px] w-[14px] items-center justify-center bg-[#b7381c] text-[11px] font-bold text-white" style={{ fontFamily: '"Liberation Sans", sans-serif' }}>P</div>
        </div>
      </TaskIcon>
      <div className="flex-1" />
      <div className="flex h-full items-center text-[14px] text-[#f0f0f0]">
        <ChevronUp size={22} color="#fff" strokeWidth={1.2} />
        <div className="ml-[18px]">
          <svg viewBox="0 0 20 18" className="h-[18px] w-[20px]"><path d="M5 1l5 3-5 3-5-3zM15 1l5 3-5 3-5-3zM5 7l5 3-5 3-5-3zM15 7l5 3-5 3-5-3zM10 12l5 3-5 3-5-3z" fill="#fff" /></svg>
        </div>
        <div className="ml-[19px]">
          <svg viewBox="0 0 22 14" className="h-[14px] w-[22px]"><path d="M4 13a4 4 0 0 1 0-7 7 7 0 0 1 13-1 4.500 4.500 0 0 1 1 8z" fill="#e6e6e6" /></svg>
        </div>
        <span className="ml-[20px]">ESP</span>
        <span className="ml-[24px]">6:37 PM</span>
        <div className="ml-[26px]">
          <svg viewBox="0 0 20 18" className="h-[18px] w-[20px]"><path d="M0 0h20v15h-7l-3 3-3-3H0z" fill="#fff" /><path d="M4 4h12M4 7.500h12M4 11h7" stroke="#26221f" /></svg>
        </div>
        <div className="ml-[26px] mr-[4px] h-full w-px bg-[#4a4642]" />
      </div>
    </div>
  );
}

function ViewMenu() {
  return (
    <div className="absolute left-[886px] top-0 flex h-[1054px] w-[1034px] border border-[#a0a0a0] bg-white shadow-sm">
      <div className="flex w-[517px] shrink-0 flex-col">
        <div className="flex h-[22px] items-center justify-center pr-[3px] text-[13px] font-bold text-black">Paneles</div>
        {PANELS.map(([label, on]) => (
          <MenuRow key={label} label={label} on={on} />
        ))}
        <div className="ml-[5px] mr-[8px] h-px bg-[#c8c8c8]" />
        <div className="flex h-[24px] items-center justify-center pr-[3px] pt-[2px] text-[13px] font-bold text-black">Barras de herramientas</div>
        {TOOLBARS.map(([label, on]) => (
          <MenuRow key={label} label={label} on={on} />
        ))}
      </div>
      <div className="-mt-[1px] flex flex-col">
        {MORE.map(([label, on]) => (
          <MenuRow key={label} label={label} on={on} />
        ))}
      </div>
    </div>
  );
}

export default function App() {
  return (
    <div className="relative flex h-screen w-[1920px] flex-col overflow-hidden bg-[#f0f0f0]" style={FONT}>
      <div className="flex h-[29px] shrink-0 items-center bg-white pl-[3px] text-[15px] text-black">
        <svg viewBox="0 0 20 20" className="h-[21px] w-[21px]">
          <circle cx="10" cy="9.500" r="7.500" fill="none" stroke="#7da832" strokeWidth="3.400" />
          <path d="M13 13l5 6" stroke="#7da832" strokeWidth="3" />
          <path d="M8 7l5 6" stroke="#e87c2c" strokeWidth="2.400" />
        </svg>
        <span className="ml-[3px]">*mod9_OKF_Jalisco — QGIS</span>
      </div>
      <div className="flex h-[24px] shrink-0 items-center gap-[15.5px] border-b border-[#d8d8d8] bg-[#f0f0f0] pl-[11px] text-[14px] text-black">
        {MENUS.map(([a, u, b]) => (
          <span key={a + u + b} className="whitespace-nowrap">
            {a}
            <span className="underline">{u}</span>
            {b}
          </span>
        ))}
      </div>
      <ToolbarOne />
      <ToolbarTwo />
      <ToolbarThree />
      <ToolbarFour />
      <div className="flex min-h-0 flex-1">
        <LeftPanel />
        <MapCanvas />
      </div>
      <div className="flex h-[33px] shrink-0 items-center pl-[4px]">
        <div className="flex h-[24px] w-[306px] items-center gap-[6px] rounded-[3px] border border-[#c4c4c4] bg-white pl-[8px] text-[13px] text-[#7a7a7a]">
          <Search size={15} color="#9a9a9a" />
          Escriba para localizar (Ctrl+K)
        </div>
      </div>
      <Taskbar />
      <ViewMenu />
    </div>
  );
}
